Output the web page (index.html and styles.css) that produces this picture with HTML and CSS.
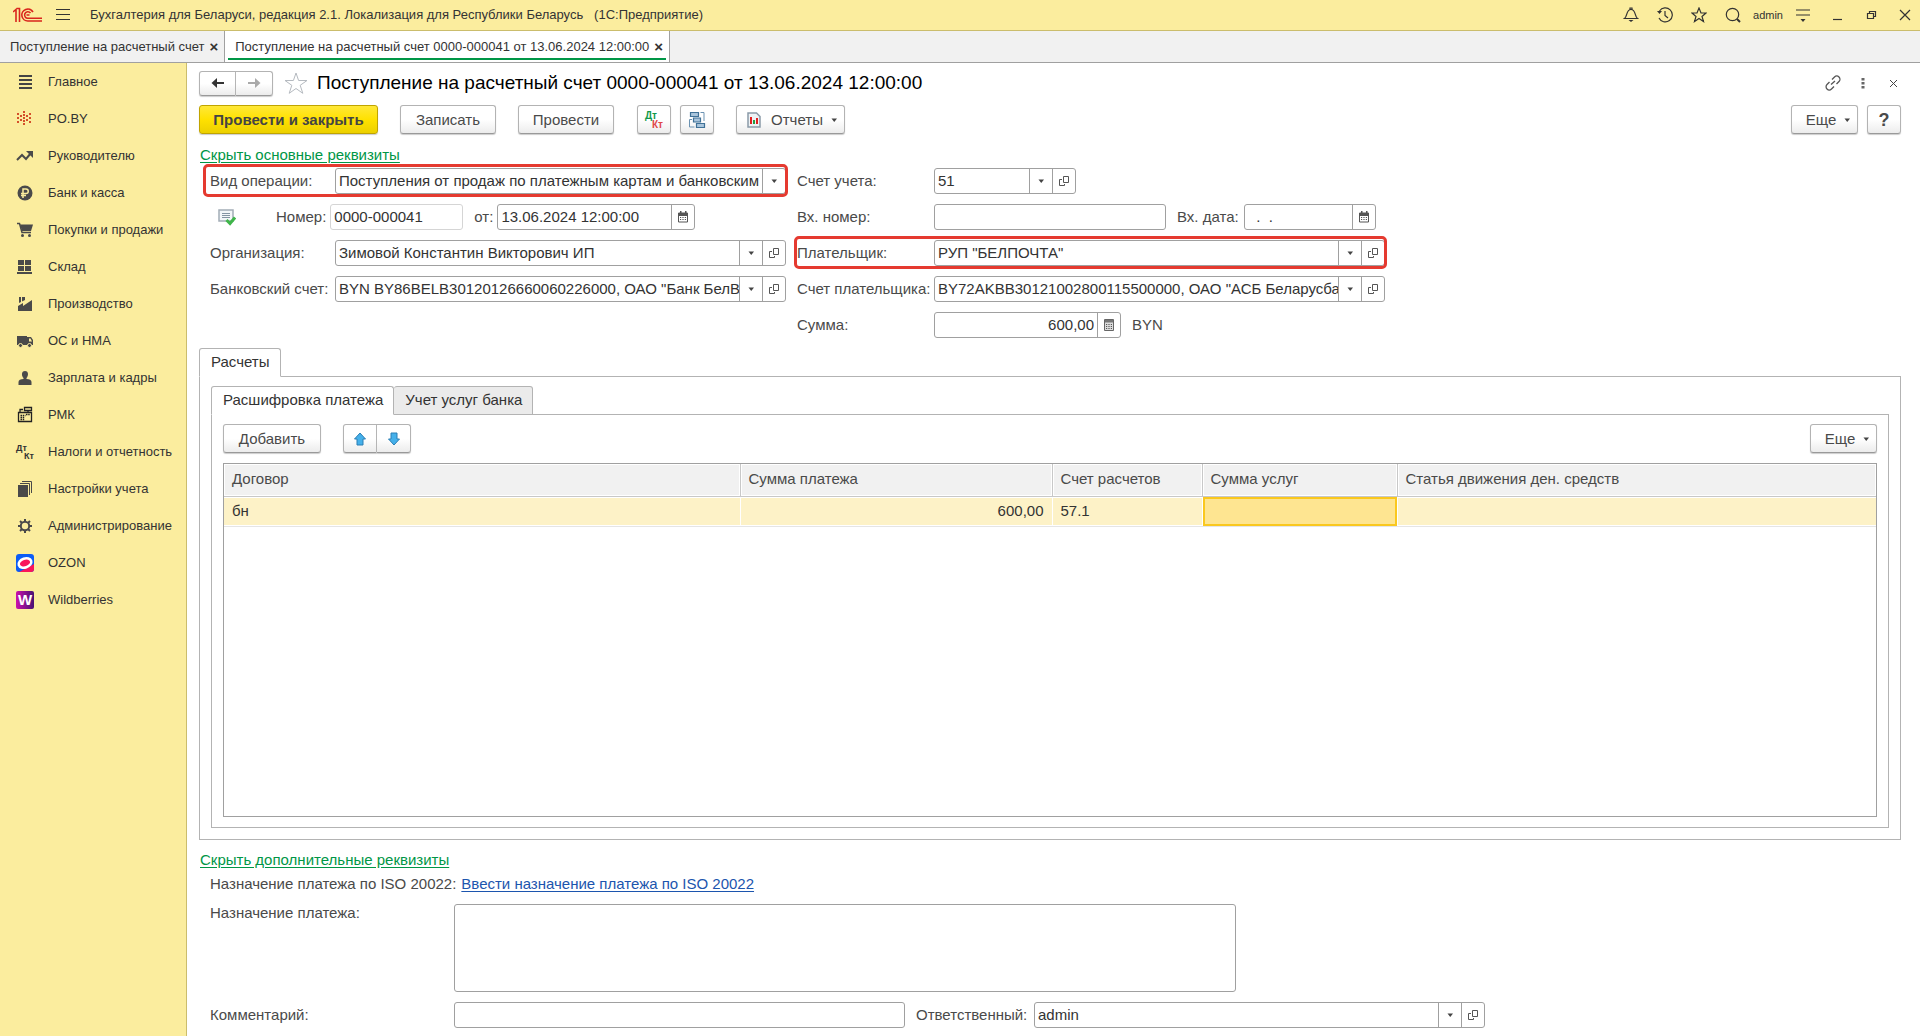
FILE: index.html
```html
<!DOCTYPE html>
<html lang="ru">
<head>
<meta charset="utf-8">
<title>Поступление на расчетный счет</title>
<link rel="stylesheet" href="styles.css">
</head>
<body>
<svg class="defs" aria-hidden="true">
  <symbol id="i-open" viewBox="0 0 12 12"><path d="M5.500 1.500h5v6h-5zM4 4.500H1.500V10.500H6.500V9" fill="none" stroke="#555"/></symbol>
  <symbol id="i-down" viewBox="0 0 12 12"><path d="M3.500 4.500h5.500L6.250 8z" fill="#444"/></symbol>
  <symbol id="i-cal" viewBox="0 0 12 12"><path d="M1.500 2h9v9h-9z" fill="none" stroke="#555"/><path d="M1 2h10v3H1zM3 0h1.500v2H3zM8 0h1.500v2H8z" fill="#555"/><path d="M3 6.500h6M3 8.500h6" stroke="#555" stroke-dasharray="1.200 1.200"/></symbol>
  <symbol id="i-calc" viewBox="0 0 12 12"><path d="M1.500.500h9v11h-9z" fill="#ddd" stroke="#666"/><path d="M2 1h8v2.500H2z" fill="#777"/><path d="M3 5.500h6M3 7.500h6M3 9.500h6" stroke="#555" stroke-dasharray="1.200 1.200"/></symbol>
</svg>

<header class="titlebar">
  <svg class="logo" width="30" height="16" viewBox="0 0 30 16"><g fill="none" stroke="#d9251d" stroke-width="1.600"><path d="M0 5 3 2.500V15M3.500 1.500H6.500V15"/><path d="M20 5A6 6 0 1 0 15 14h14"/><path d="M17.500 6A3.300 3.300 0 1 0 15 11.300h14"/></g><path d="M13.500 8h3" stroke="#d9251d" stroke-width="1.500"/></svg>
  <button class="plain" aria-label="Меню"><svg width="16" height="14" viewBox="0 0 16 14"><path d="M0 1.500h14M0 6.500h14M0 11.500h14" stroke="#333"/></svg></button>
  <h1 class="app-name">Бухгалтерия для Беларуси, редакция 2.1. Локализация для Республики Беларусь &nbsp; (1С:Предприятие)</h1>
  <div class="tools">
    <button class="plain" aria-label="Уведомления"><svg width="16" height="16" viewBox="0 0 16 16"><path d="M1.500 11.500c3-2 1.500-9 6.500-9s3.500 7 6.500 9zM7 2.500V1h2v1.500" fill="none" stroke="#333" stroke-width="1.200"/><path d="M5.500 13h5L8 15z" fill="#333"/></svg></button>
    <button class="plain" aria-label="История"><svg width="16" height="16" viewBox="0 0 16 16"><path d="M2.500 4a7 7 0 1 1-.500 7M8 4v4.500l3 2.500" fill="none" stroke="#333" stroke-width="1.200"/><path d="M0 4h5L2.500 7z" fill="#333"/></svg></button>
    <button class="plain" aria-label="Избранное"><svg width="16" height="16" viewBox="0 0 16 16"><path d="m8 1 2 5h5l-4 3.500 1.500 5L8 11.500l-4.500 3 1.500-5L1 6h5z" fill="none" stroke="#333" stroke-width="1.200"/></svg></button>
    <button class="plain" aria-label="Поиск"><svg width="16" height="16" viewBox="0 0 16 16"><circle cx="7.500" cy="7.500" r="6.200" fill="none" stroke="#333" stroke-width="1.200"/><path d="m12 12 3 3" stroke="#333" stroke-width="2"/></svg></button>
    <span class="user">admin</span>
    <button class="plain" aria-label="Сервис"><svg width="16" height="16" viewBox="0 0 16 16"><path d="M1 3h14M1 8h14" stroke="#333" stroke-width="1.200"/><path d="M5.500 12h5L8 15z" fill="#333"/></svg></button>
    <button class="plain" aria-label="Свернуть"><svg width="16" height="16" viewBox="0 0 16 16"><path d="M4 12.500h9" stroke="#333" stroke-width="1.200"/></svg></button>
    <button class="plain" aria-label="Восстановить"><svg width="16" height="16" viewBox="0 0 16 16"><path d="M4.500 6.500h6v5h-6zM6.500 6.500v-2h6v5h-2" fill="none" stroke="#333" stroke-width="1.200"/></svg></button>
    <button class="plain" aria-label="Закрыть"><svg width="16" height="16" viewBox="0 0 16 16"><path d="m3 3 10 10M13 3 3 13" stroke="#333" stroke-width="1.200"/></svg></button>
  </div>
</header>

<nav class="tabs">
  <a class="tab" href="#list">Поступление на расчетный счет<b>×</b></a>
  <a class="tab tab-on" href="#doc">Поступление на расчетный счет 0000-000041 от 13.06.2024 12:00:00<b>×</b></a>
</nav>

<div class="body">
<nav class="side">
  <a href="#1"><svg viewBox="0 0 18 18"><path d="M3 3h13M3 7h13M3 11h13M3 15h13" stroke="#444" stroke-width="2"/></svg>Главное</a>
  <a href="#2"><svg viewBox="0 0 18 18"><path d="M7 2h2M7 5h2M7 8h2M7 11h2M7 14h2M4 6h2M10 6h2M4 10h2M10 10h2M1 4h2M1 8h2M1 12h2M13 4h2M13 8h2M13 12h2" stroke="#d4502a" stroke-width="2"/></svg>PO.BY</a>
  <a href="#3"><svg viewBox="0 0 18 18"><path d="m1 13 5-5 4 4 5-6" fill="none" stroke="#4a4a4a" stroke-width="2"/><path d="M10 4h7v7z" fill="#4a4a4a"/></svg>Руководителю</a>
  <a href="#4"><svg viewBox="0 0 18 18"><circle cx="9" cy="9" r="7.500" fill="#4a4a4a"/><path d="M7 14V5h3a2.200 2.200 0 0 1 0 4.500H5M5 11.500h5" fill="none" stroke="#fbed9e" stroke-width="1.500"/></svg>Банк и касса</a>
  <a href="#5"><svg viewBox="0 0 18 18"><path d="M1 2.500h2.500l2.500 9h9" fill="none" stroke="#4a4a4a" stroke-width="1.500"/><path d="M4 3.500h13L15 10H6z" fill="#4a4a4a"/><circle cx="6.500" cy="14.500" r="1.500" fill="#4a4a4a"/><circle cx="13.500" cy="14.500" r="1.500" fill="#4a4a4a"/></svg>Покупки и продажи</a>
  <a href="#6"><svg viewBox="0 0 18 18"><path d="M2 2h6v5H2zM9 2h6v5H9zM2 8h6v5H2zM9 8h6v5H9zM1 14h15v2H1z" fill="#4a4a4a"/></svg>Склад</a>
  <a href="#7"><svg viewBox="0 0 18 18"><path d="M2 16v-5l5-3v3l9-6v11zM3 2h2v5L3 8zM6 2h3v3L6 6.500z" fill="#4a4a4a"/></svg>Производство</a>
  <a href="#8"><svg viewBox="0 0 18 18"><path d="M1 4h10v9H1zM11 5h4l2 3v5h-6z" fill="#4a4a4a"/><path d="M13 6.500h1.500l1.500 3h-3z" fill="#fbed9e"/><circle cx="4.500" cy="13.500" r="2" fill="#4a4a4a" stroke="#fbed9e"/><circle cx="13.500" cy="13.500" r="2" fill="#4a4a4a" stroke="#fbed9e"/></svg>ОС и НМА</a>
  <a href="#9"><svg viewBox="0 0 18 18"><path d="M9 2c4 0 3.500 5 1.500 7v1c3 0 5 1 5 3v3h-13v-3c0-2 2-3 5-3V9C5.500 7 5 2 9 2z" fill="#4a4a4a"/></svg>Зарплата и кадры</a>
  <a href="#10"><svg viewBox="0 0 18 18"><path d="M2.500 6.500h13v9h-13zM8.500 1.500h7v3h-7zM4 6.500v-3h3M12 4.500v2" fill="none" stroke="#222" stroke-width="1.300"/><path d="M4.500 9.500h5M4.500 11.500h4M4.500 13.500h4M10 8.500h4" stroke="#222" stroke-width="1.300" stroke-dasharray="1.500 .700"/></svg>РМК</a>
  <a href="#11"><span class="dk"><i>Дт</i><i>Кт</i></span>Налоги и отчетность</a>
  <a href="#12"><svg viewBox="0 0 18 18"><path d="M2 5h10v12H2z" fill="#4a4a4a"/><path d="M4 3.500h9.500V15M6 1.500h9.500V13" fill="none" stroke="#4a4a4a"/></svg>Настройки учета</a>
  <a href="#13"><svg viewBox="0 0 18 18"><circle cx="9" cy="9" r="4.200" fill="none" stroke="#4a4a4a" stroke-width="2"/><path d="M9 2v3M9 13v3M2 9h3M13 9h3M4 4l2 2M12 12l2 2M4 14l2-2M12 6l2-2" stroke="#4a4a4a" stroke-width="2"/></svg>Администрирование</a>
  <a href="#14"><svg viewBox="0 0 18 18"><rect width="18" height="18" rx="3" fill="#0b5cf5"/><path d="M3 18 18 10v5a3 3 0 0 1-3 3z" fill="#f9155b"/><ellipse cx="9" cy="9" rx="6.500" ry="4.500" transform="rotate(-18 9 9)" fill="#f9155b" stroke="#fff" stroke-width="2.500"/></svg>OZON</a>
  <a href="#15"><span class="wb">W</span>Wildberries</a>
</nav>

<main class="doc">
  <div class="head">
    <div class="pair">
      <button class="btn" aria-label="Назад"><svg width="16" height="12" viewBox="0 0 16 12"><path d="M14 6H4" stroke="#333" stroke-width="2"/><path d="M7 1 1.500 6 7 11z" fill="#333"/></svg></button>
      <button class="btn" aria-label="Вперед"><svg width="16" height="12" viewBox="0 0 16 12"><path d="M2 6h10" stroke="#aaa" stroke-width="2"/><path d="m9 1 5.500 5L9 11z" fill="#aaa"/></svg></button>
    </div>
    <svg class="fav" width="24" height="24" viewBox="0 0 24 24"><path d="m12 2 2.600 7.500H23l-6.800 4.800 2.600 8L12 17.500l-6.800 4.800 2.600-8L1 9.500h8.400z" fill="#fff" stroke="#b5bac0"/></svg>
    <h2>Поступление на расчетный счет 0000-000041 от 13.06.2024 12:00:00</h2>
    <div class="head-tools">
      <button class="plain" aria-label="Ссылка"><svg width="16" height="16" viewBox="0 0 16 16"><path d="M6 9.500 10 6M7 4.500 9.500 2A3 3 0 0 1 14 6.500L11.500 9M9 11.500 6.500 14A3 3 0 0 1 2 9.500L4.500 7" fill="none" stroke="#555" stroke-width="1.300"/></svg></button>
      <button class="plain" aria-label="Действия"><svg width="16" height="16" viewBox="0 0 16 16"><path d="M6.500 3h3v2.500h-3zM6.500 7h3v2.500h-3zM6.500 11h3v2.500h-3z" fill="#666"/></svg></button>
      <button class="plain" aria-label="Закрыть форму"><svg width="16" height="16" viewBox="0 0 16 16"><path d="m5 5 7 7M12 5l-7 7" stroke="#444"/></svg></button>
    </div>
  </div>

  <div class="bar">
    <button class="btn primary">Провести и закрыть</button>
    <button class="btn save">Записать</button>
    <button class="btn save">Провести</button>
    <div class="icons">
      <button class="btn sq" aria-label="Проводки"><span class="dk color"><i>Дт</i><i>Кт</i></span></button>
      <button class="btn sq" aria-label="Структура"><svg width="18" height="18" viewBox="0 0 18 18"><g fill="#a9c5dc" stroke="#3f7197" stroke-width="1.200"><path d="M2.500 1.500h8v4h-8zM5.500 7h7v4h-7zM8.500 12.500h8v4h-8z"/></g><path d="M12.500 1.500H16V10M4 8.500H1.500V16H6.500" fill="none" stroke="#6c93b2"/></svg></button>
    </div>
    <button class="btn report"><svg class="sheet-icon" width="14" height="16" viewBox="0 0 14 16"><path d="M1 1h8.500L13 4.500V15H1z" fill="#eef2f5" stroke="#8b9aa8" stroke-width="1.500"/><path d="M4 5v7M10 6v6" stroke="#e02020" stroke-width="2"/><path d="M7 8v4" stroke="#22a045" stroke-width="2"/></svg>Отчеты<svg width="12" height="12"><use href="#i-down"/></svg></button>
    <button class="btn more push">Еще<svg width="12" height="12"><use href="#i-down"/></svg></button>
    <button class="btn help">?</button>
  </div>

  <a class="toggle" href="#main">Скрыть основные реквизиты</a>

  <div class="form">
    <div class="col-l">
      <div class="row marked"><label for="op">Вид операции:</label>
        <div class="field grow"><select id="op"><option>Поступления от продаж по платежным картам и банковским кредитам</option></select><span class="arrow"><svg><use href="#i-down"/></svg></span></div></div>
      <div class="row numrow">
        <svg class="posted" width="18" height="17" viewBox="0 0 18 17"><path d="M1 1h14v11H1z" fill="#f3f6f8" stroke="#a3adb6" stroke-width="1.500"/><path d="M4 4.500h8M4 6.500h8M4 8.500h8" stroke="#8494a2"/><path d="m8.500 11 3.500 3.500 5-6" fill="none" stroke="#3fb54a" stroke-width="3"/></svg>
        <label for="num">Номер:</label><div class="field num"><input id="num" value="0000-000041"></div>
        <label for="dt">от:</label><div class="field date"><input id="dt" value="13.06.2024 12:00:00"><button aria-label="Календарь"><svg><use href="#i-cal"/></svg></button></div></div>
      <div class="row"><label for="org">Организация:</label>
        <div class="field grow"><input id="org" value="Зимовой Константин Викторович ИП"><button aria-label="Выбрать"><svg><use href="#i-down"/></svg></button><button aria-label="Открыть"><svg><use href="#i-open"/></svg></button></div></div>
      <div class="row"><label for="bank">Банковский счет:</label>
        <div class="field grow"><input id="bank" value="BYN BY86BELB30120126660060226000, ОАО &quot;Банк БелВЭБ&quot;"><button aria-label="Выбрать"><svg><use href="#i-down"/></svg></button><button aria-label="Открыть"><svg><use href="#i-open"/></svg></button></div></div>
    </div>
    <div class="col-r">
      <div class="row"><label for="acc">Счет учета:</label>
        <div class="field acc"><input id="acc" value="51"><button aria-label="Выбрать"><svg><use href="#i-down"/></svg></button><button aria-label="Открыть"><svg><use href="#i-open"/></svg></button></div></div>
      <div class="row"><label for="inn">Вх. номер:</label><div class="field inn"><input id="inn"></div>
        <label class="mid" for="ind">Вх. дата:</label><div class="field ind"><input id="ind" value="  .  ."><button aria-label="Календарь"><svg><use href="#i-cal"/></svg></button></div></div>
      <div class="row marked"><label for="payer">Плательщик:</label>
        <div class="field grow"><input id="payer" value="РУП &quot;БЕЛПОЧТА&quot;"><button aria-label="Выбрать"><svg><use href="#i-down"/></svg></button><button aria-label="Открыть"><svg><use href="#i-open"/></svg></button></div></div>
      <div class="row"><label for="pacc">Счет плательщика:</label>
        <div class="field grow"><input id="pacc" value="BY72AKBB30121002800115500000, ОАО &quot;АСБ Беларусбанк&quot;"><button aria-label="Выбрать"><svg><use href="#i-down"/></svg></button><button aria-label="Открыть"><svg><use href="#i-open"/></svg></button></div></div>
      <div class="row"><label for="sum">Сумма:</label>
        <div class="field sum"><input id="sum" value="600,00"><button aria-label="Калькулятор"><svg><use href="#i-calc"/></svg></button></div><span class="cur">BYN</span></div>
    </div>
  </div>

  <section class="sheet outer">
    <div class="sheet-tabs"><button class="stab on">Расчеты</button></div>
    <div class="sheet-body">
      <section class="sheet">
        <div class="sheet-tabs"><button class="stab on">Расшифровка платежа</button><button class="stab">Учет услуг банка</button></div>
        <div class="sheet-body inner">
          <div class="bar">
            <button class="btn add">Добавить</button>
            <div class="pair move">
              <button class="btn" aria-label="Вверх"><svg width="14" height="14" viewBox="0 0 14 14"><path d="m7 1 5.500 6H10v6H4V7H1.500z" fill="#45b0ea" stroke="#2b7fb5"/></svg></button>
              <button class="btn" aria-label="Вниз"><svg width="14" height="14" viewBox="0 0 14 14"><path d="m7 13 5.500-6H10V1H4v6H1.500z" fill="#45b0ea" stroke="#2b7fb5"/></svg></button>
            </div>
            <button class="btn more push">Еще<svg width="12" height="12"><use href="#i-down"/></svg></button>
          </div>
          <div class="grid">
            <table>
              <colgroup><col class="c1"><col class="c2"><col class="c3"><col class="c4"><col></colgroup>
              <thead><tr><th>Договор</th><th>Сумма платежа</th><th>Счет расчетов</th><th>Сумма услуг</th><th>Статья движения ден. средств</th></tr></thead>
              <tbody><tr><td>бн</td><td class="r">600,00</td><td>57.1</td><td class="cur-cell"></td><td></td></tr></tbody>
            </table>
          </div>
        </div>
      </section>
    </div>
  </section>

  <a class="toggle extra" href="#extra">Скрыть дополнительные реквизиты</a>
  <div class="foot">
    <div class="row iso"><span class="lbl">Назначение платежа по ISO 20022:</span><a class="enter" href="#iso">Ввести назначение платежа по ISO 20022</a></div>
    <div class="row purpose"><label for="pur">Назначение платежа:</label><textarea id="pur"></textarea></div>
    <div class="row"><label for="com">Комментарий:</label><div class="field com"><input id="com"></div>
      <label class="mid" for="resp">Ответственный:</label><div class="field resp"><input id="resp" value="admin"><button aria-label="Выбрать"><svg><use href="#i-down"/></svg></button><button aria-label="Открыть"><svg><use href="#i-open"/></svg></button></div></div>
  </div>
</main>
</div>
</body>
</html>
```
FILE: styles.css
```css
* { box-sizing: border-box; }
body {
  margin: 0;
  min-height: 100vh;
  display: flex;
  flex-direction: column;
  background: #fff;
  color: #4a4a4a;
  font: 15px/18px "Liberation Sans", Arial, sans-serif;
}
button, input, select, textarea { font: inherit; color: inherit; margin: 0; }
h1, h2 { margin: 0; font-weight: normal; }
a { color: inherit; text-decoration: none; }
svg { display: block; flex: none; }
.defs { width: 0; height: 0; position: absolute; }
.plain { padding: 0; border: 0; background: none; }

/* window title */
.titlebar {
  height: 31px;
  display: flex;
  align-items: center;
  padding: 0 7px 0 13px;
  background: #fbed9e;
  border-bottom: 1px solid #cbbd6c;
  color: #333;
}
.logo { margin-right: 13px; }
.app-name { margin-left: 18px; font-size: 13px; }
.tools { margin-left: auto; display: flex; align-items: center; gap: 18px; }
.user { font-size: 11px; margin: 0 -6px; }

/* open windows */
.tabs {
  height: 32px;
  display: flex;
  background: #f1f1f1;
  border-bottom: 1px solid #a0a0a0;
  color: #333;
  font-size: 13px;
}
.tab { display: flex; align-items: center; gap: 5px; padding: 0 6px 0 10px; border-right: 1px solid #a0a0a0; }
.tab b { font-size: 15px; }
.tab-on { background: linear-gradient(#009646, #009646) center bottom 2px / calc(100% - 6px) 2px no-repeat #fff; }

.body { flex: 1; display: flex; }

/* sections */
.side {
  width: 187px;
  flex: none;
  background: #fbed9e;
  border-right: 1px solid #cbbd6c;
  color: #333;
  font-size: 13px;
}
.side a { height: 37px; display: flex; align-items: center; gap: 14px; padding: 1px 0 0 16px; }
.side svg, .wb { width: 18px; height: 18px; flex: none; }
.wb { border-radius: 2px; background: linear-gradient(90deg, #cb11ab, #481173); color: #fff; font-size: 15px; font-weight: bold; text-align: center; }
.dk { width: 18px; flex: none; font-size: 9px; line-height: 8px; font-weight: bold; }
.dk i { display: block; font-style: normal; text-align: left; }
.dk i + i { text-align: right; }
.dk.color { font-size: 10px; line-height: 9px; color: #12994a; }
.dk.color i + i { color: #e04848; }

/* document form */
.doc { flex: 1; min-width: 0; display: flex; flex-direction: column; padding: 7px 19px 8px 12px; }
.head { display: flex; align-items: center; height: 26px; }
.pair { display: flex; }
.pair .btn { width: 37px; height: 25px; padding: 0; }
.pair .btn:first-child { border-radius: 3px 0 0 3px; }
.pair .btn + .btn { border-left: 0; border-radius: 0 3px 3px 0; }
.fav { margin: 0 9px 0 11px; }
h2 { font-size: 19px; line-height: 22px; color: #000; }
.head-tools { margin-left: auto; display: flex; gap: 14px; }
.bar { display: flex; margin-top: 9px; }
.btn {
  height: 29px;
  display: flex;
  align-items: center;
  justify-content: center;
  padding: 0;
  border: 1px solid #b3b3b3;
  border-bottom-color: #999;
  border-radius: 3px;
  background: linear-gradient(#fff 50%, #ececec);
  box-shadow: 0 1px 1px #ccc;
}
.primary { width: 179px; margin-right: 22px; font-weight: bold; border-color: #c0a400; background: linear-gradient(#ffe838, #ffe100 50%, #ecd000); color: #444; }
.save { width: 96px; margin-right: 22px; }
.icons { display: flex; gap: 9px; margin: 0 22px 0 1px; }
.sq { width: 34px; }
.report { width: 109px; gap: 5px; padding-left: 6px; }
.sheet-icon { margin-right: 5px; }
.more { width: 67px; gap: 5px; padding-left: 10px; }
.push { margin-left: auto; }
.help { width: 34px; margin-left: 9px; font-size: 18px; font-weight: bold; }

.toggle { align-self: flex-start; margin-top: 12px; margin-left: 1px; color: #009646; text-decoration: underline; text-underline-offset: 2px; }
.form { display: flex; gap: 11px; padding: 4px 0 0 11px; }
.col-l, .col-r { display: flex; flex-direction: column; gap: 10px; }
.col-l { width: 576px; }
.col-r { width: 588px; }
.row { display: flex; align-items: center; height: 26px; position: relative; }
.col-l label { width: 125px; }
.col-r label { width: 137px; white-space: nowrap; }
.col-l .numrow label { width: auto; margin: 0 4px 0 11px; }
.numrow .posted + label { margin-left: 40px; }
.numrow .posted { margin-left: 8px; }
.col-r .mid { width: 67px; margin-left: 11px; }
.marked::after { content: ""; position: absolute; inset: -4px -2px -3px -7px; border: 3px solid #e53a30; border-radius: 5px; pointer-events: none; }
.col-r .marked::after { left: -3px; }
.field { display: flex; height: 26px; border: 1px solid #a0a0a0; border-radius: 3px; background: #fff; color: #333; }
.field input, .field select { flex: 1; width: 0; min-width: 0; padding: 0 0 0 3px; border: 0; background: none; outline: 0; appearance: none; }
.field select { overflow: hidden; text-overflow: clip; }
.field button, .arrow { width: 23px; flex: none; display: flex; align-items: center; justify-content: center; padding: 0; border: 0; border-left: 1px solid #a0a0a0; background: none; }
.field svg { width: 12px; height: 12px; }
.grow { flex: 1; }
.num { width: 133px; border-color: #d5d5d5; }
.date { width: 198px; }
.acc { width: 142px; }
.inn { width: 232px; }
.ind { width: 132px; }
.ind input { white-space: pre; }
.sum { width: 187px; }
.field.sum input { text-align: right; padding-right: 3px; }
.cur { margin-left: 11px; }

/* tabbed sheets */
.sheet { flex: 1; display: flex; flex-direction: column; }
.outer { margin-top: 10px; }
.sheet-tabs { display: flex; height: 29px; margin-bottom: -1px; position: relative; color: #333; }
.stab { padding: 0 10px 2px 11px; border: 1px solid #b3b3b3; border-radius: 3px 3px 0 0; background: #ebebeb; }
.stab.on { background: #fff; border-bottom-color: #fff; }
.stab + .stab { border-left: 0; }
.sheet-body { flex: 1; display: flex; flex-direction: column; padding: 9px 11px 11px; border: 1px solid #b3b3b3; }
.sheet-body.inner { padding: 9px 11px 10px; }
.inner .bar { margin: 0; }
.add { width: 98px; margin-right: 22px; }
.move .btn { width: 34px; height: 29px; }
.grid { flex: 1; margin-top: 10px; border: 1px solid #a0a0a0; }
table { width: 100%; table-layout: fixed; border-collapse: collapse; }
.c1 { width: 516px; }
.c2 { width: 312px; }
.c3 { width: 150px; }
.c4 { width: 195px; }
th, td { padding: 0 8px; text-align: left; font-weight: normal; }
th { height: 32px; padding-bottom: 2px; background: #f1f1f1; border-right: 1px solid #c8c8c8; border-bottom: 1px solid #c8c8c8; box-shadow: inset 0 0 0 1px #fff; }
td { height: 30px; background: #fdf2c7; color: #333; border-right: 1px solid #fff; border-bottom: 1px solid #e5e5e5; box-shadow: inset 0 1px #fff, inset 0 -1px #fff; }
th:last-child, td:last-child { border-right: 0; }
.r { text-align: right; }
.cur-cell { background: #fee591; box-shadow: inset 0 0 0 2px #fac81e; }

/* additional details */
.extra { margin-top: 11px; }
.foot { padding-left: 11px; }
.foot label { width: 244px; flex: none; white-space: nowrap; }
.iso { height: 30px; gap: 5px; }
.enter { color: #1c55ae; text-decoration: underline; text-underline-offset: 2px; }
.purpose { height: auto; align-items: flex-start; margin: 5px 0 10px; }
textarea { width: 782px; height: 88px; border: 1px solid #a0a0a0; border-radius: 3px; resize: none; outline: 0; }
.com { width: 451px; }
.foot .mid { width: 118px; margin-left: 11px; }
.resp { width: 451px; }
```
